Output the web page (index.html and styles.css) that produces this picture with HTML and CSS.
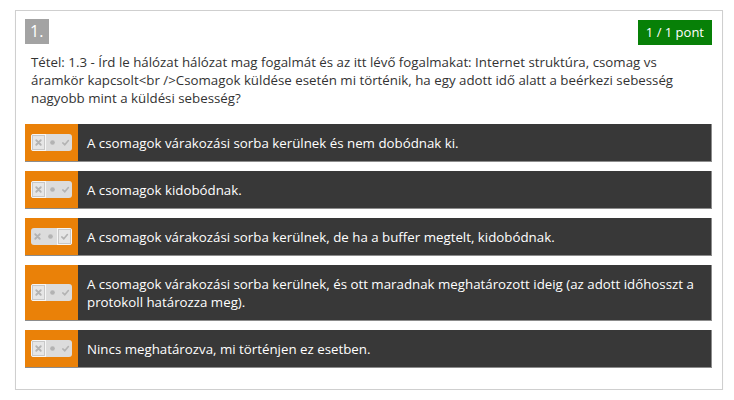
FILE: index.html
```html
<!DOCTYPE html>
<html lang="hu">
<head>
<meta charset="utf-8">
<link rel="stylesheet" href="styles.css">
</head>
<body>
<div class="card">
  <div class="head">
    <span class="num">1.</span>
    <span class="points">1 / 1 pont</span>
  </div>
  <p class="question">Tétel: 1.3 - Írd le hálózat hálózat mag fogalmát és az itt lévő fogalmakat: Internet struktúra, csomag vs áramkör kapcsolt&lt;br /&gt;Csomagok küldése esetén mi történik, ha egy adott idő alatt a beérkezi sebesség nagyobb mint a küldési sebesség?</p>
  <div class="answers">
    <div class="answer">
      <div class="mark"><span class="toggle"><span class="seg sel"><svg viewBox="0 0 10 10"><path d="M2.5 2.5L7.5 7.5M7.5 2.5L2.5 7.5"/></svg></span><span class="seg"><svg viewBox="0 0 10 10"><circle cx="5" cy="5" r="2.6"/></svg></span><span class="seg"><svg viewBox="0 0 10 10"><path class="chk" d="M2 5.5L4.2 7.5L8.2 2.8"/></svg></span></span></div>
      <div class="text">A csomagok várakozási sorba kerülnek és nem dobódnak ki.</div>
    </div>
    <div class="answer">
      <div class="mark"><span class="toggle"><span class="seg sel"><svg viewBox="0 0 10 10"><path d="M2.5 2.5L7.5 7.5M7.5 2.5L2.5 7.5"/></svg></span><span class="seg"><svg viewBox="0 0 10 10"><circle cx="5" cy="5" r="2.6"/></svg></span><span class="seg"><svg viewBox="0 0 10 10"><path class="chk" d="M2 5.5L4.2 7.5L8.2 2.8"/></svg></span></span></div>
      <div class="text">A csomagok kidobódnak.</div>
    </div>
    <div class="answer">
      <div class="mark"><span class="toggle"><span class="seg"><svg viewBox="0 0 10 10"><path d="M2.5 2.5L7.5 7.5M7.5 2.5L2.5 7.5"/></svg></span><span class="seg"><svg viewBox="0 0 10 10"><circle cx="5" cy="5" r="2.6"/></svg></span><span class="seg sel"><svg viewBox="0 0 10 10"><path class="chk" d="M2 5.5L4.2 7.5L8.2 2.8"/></svg></span></span></div>
      <div class="text">A csomagok várakozási sorba kerülnek, de ha a buffer megtelt, kidobódnak.</div>
    </div>
    <div class="answer">
      <div class="mark"><span class="toggle"><span class="seg sel"><svg viewBox="0 0 10 10"><path d="M2.5 2.5L7.5 7.5M7.5 2.5L2.5 7.5"/></svg></span><span class="seg"><svg viewBox="0 0 10 10"><circle cx="5" cy="5" r="2.6"/></svg></span><span class="seg"><svg viewBox="0 0 10 10"><path class="chk" d="M2 5.5L4.2 7.5L8.2 2.8"/></svg></span></span></div>
      <div class="text">A csomagok várakozási sorba kerülnek, és ott maradnak meghatározott ideig (az adott időhosszt a protokoll határozza meg).</div>
    </div>
    <div class="answer">
      <div class="mark"><span class="toggle"><span class="seg sel"><svg viewBox="0 0 10 10"><path d="M2.5 2.5L7.5 7.5M7.5 2.5L2.5 7.5"/></svg></span><span class="seg"><svg viewBox="0 0 10 10"><circle cx="5" cy="5" r="2.6"/></svg></span><span class="seg"><svg viewBox="0 0 10 10"><path class="chk" d="M2 5.5L4.2 7.5L8.2 2.8"/></svg></span></span></div>
      <div class="text">Nincs meghatározva, mi történjen ez esetben.</div>
    </div>
  </div>
</div>
</body>
</html>
```

FILE: styles.css
```css
html, body {
  margin: 0;
  padding: 0;
  background: #ffffff;
}
body {
  font-family: "Open Sans", "Noto Sans", sans-serif;
  color: #333333;
}
.card {
  box-sizing: border-box;
  margin: 10px 0 0 15px;
  width: 708px;
  height: 380px;
  border: 1px solid #cfcfcf;
  box-shadow: 0 1px 1px rgba(0,0,0,0.06);
  padding: 8px 10px 18px 9px;
}
.head {
  display: flex;
  justify-content: space-between;
  align-items: flex-start;
  height: 26px;
}
.num {
  display: block;
  background: #a3a3a3;
  color: #ffffff;
  font-size: 16px;
  line-height: 25px;
  height: 25px;
  padding: 0 6px 0 5px;
}
.points {
  display: block;
  margin-top: 1px;
  background: #078007;
  color: #ffffff;
  font-size: 13px;
  line-height: 25px;
  height: 25px;
  padding: 0 8px;
}
.question {
  margin: 8px 12px 0 6px;
  font-size: 13.3px;
  line-height: 18px;
  color: #333333;
}
.answers {
  margin-top: 17px;
  display: flex;
  flex-direction: column;
  gap: 9px;
}
.answer {
  display: flex;
  background: #383838;
  border-right: 1px solid #8c8c8c;
  border-bottom: 1px solid #8c8c8c;
  min-height: 37px;
}
.mark {
  flex: 0 0 53px;
  background: #ea8108;
  display: flex;
  align-items: center;
  justify-content: flex-start;
  padding-left: 6px;
  box-sizing: border-box;
}
.toggle {
  display: flex;
  width: 41px;
  height: 17px;
  background: #dcdcdc;
  border-radius: 3px;
  overflow: hidden;
}
.seg {
  flex: 1;
  display: flex;
  align-items: center;
  justify-content: center;
  box-sizing: border-box;
}
.seg.sel {
  background: #e6e6e6;
  border: 1px solid #f6f6f6;
  box-shadow: inset 0 0 0 1px #c8c8c8;
}
.seg svg {
  width: 9px;
  height: 9px;
}
.seg path {
  stroke: #b3b3b3;
  stroke-width: 2;
  fill: none;
  stroke-linecap: round;
}
.seg path.chk {
  stroke-width: 1.8;
}
.seg circle {
  fill: #b3b3b3;
}
.text {
  flex: 1;
  color: #ffffff;
  font-size: 13.3px;
  line-height: 18px;
  padding: 10px 12px 9px 9px;
}
```
